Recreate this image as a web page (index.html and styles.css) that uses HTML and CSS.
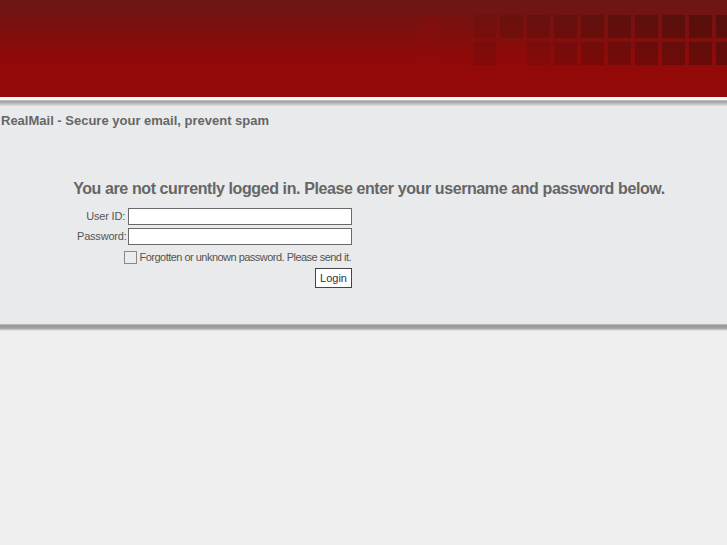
FILE: index.html
```html
<!DOCTYPE html>
<html>
<head>
<meta charset="utf-8">
<title>RealMail</title>
<link rel="stylesheet" href="styles.css">
</head>
<body>
<header class="header">
  <div class="tiles">
    <span></span><span></span><span></span><span></span><span></span><span></span><span></span><span></span><span></span><span></span><span></span><span></span>
    <span></span><span></span><span></span><span></span><span></span><span></span><span></span><span></span><span></span><span></span><span></span><span></span>
  </div>
</header>
<div class="sep-top"></div>
<main class="content">
  <div class="brand">RealMail - Secure your email, prevent spam</div>
  <h1 class="notice">You are not currently logged in. Please enter your username and password below.</h1>
  <form class="login">
    <label class="lbl" for="uid">User ID:</label>
    <input class="field" id="uid" type="text">
    <label class="lbl" for="pwd">Password:</label>
    <input class="field" id="pwd" type="password">
    <div class="remind"><span class="box"></span><span>Forgotten or unknown password. Please send it.</span></div>
    <div class="actions"><button type="button" class="btn">Login</button></div>
  </form>
</main>
<div class="sep-bottom"></div>
</body>
</html>
```
FILE: styles.css
```css
html, body {
  margin: 0;
  padding: 0;
  background: #efefef;
  font-family: "Liberation Sans", Arial, sans-serif;
}
.header {
  height: 97px;
  background: linear-gradient(#6d1614 0px, #721412 12px, #800f0d 35px, #8f0a09 58px, #930908 72px, #930908 97px);
  overflow: hidden;
}
.tiles {
  display: grid;
  grid-template-columns: repeat(12, 23px);
  grid-template-rows: 23px 23px;
  column-gap: 4px;
  row-gap: 4px;
  padding-top: 15px;
  margin-left: 419px;
  width: 330px;
}
.tiles span { background: rgba(70, 14, 10, 0.3); }
.tiles span:nth-child(1) { background: rgba(170, 10, 10, 0.12); }
.tiles span:nth-child(2) { background: rgba(150, 10, 10, 0.1); }
.tiles span:nth-child(3) { background: rgba(70, 14, 10, 0.14); }
.tiles span:nth-child(4) { background: rgba(70, 14, 10, 0.22); }
.tiles span:nth-child(5) { background: rgba(70, 14, 10, 0.28); }
.tiles span:nth-child(6) { background: rgba(70, 14, 10, 0.34); }
.tiles span:nth-child(7) { background: rgba(70, 14, 10, 0.4); }
.tiles span:nth-child(8) { background: rgba(70, 14, 10, 0.46); }
.tiles span:nth-child(9) { background: rgba(70, 14, 10, 0.5); }
.tiles span:nth-child(10) { background: rgba(70, 14, 10, 0.55); }
.tiles span:nth-child(11) { background: rgba(70, 14, 10, 0.6); }
.tiles span:nth-child(12) { background: rgba(70, 14, 10, 0.62); }
.tiles span:nth-child(13) { background: rgba(170, 10, 10, 0.06); }
.tiles span:nth-child(14) { background: rgba(150, 10, 10, 0.08); }
.tiles span:nth-child(15) { background: rgba(70, 14, 10, 0.16); }
.tiles span:nth-child(16) { background: rgba(70, 14, 10, 0); }
.tiles span:nth-child(17) { background: rgba(70, 14, 10, 0.18); }
.tiles span:nth-child(18) { background: rgba(70, 14, 10, 0.26); }
.tiles span:nth-child(19) { background: rgba(70, 14, 10, 0.3); }
.tiles span:nth-child(20) { background: rgba(70, 14, 10, 0.38); }
.tiles span:nth-child(21) { background: rgba(70, 14, 10, 0.42); }
.tiles span:nth-child(22) { background: rgba(70, 14, 10, 0.48); }
.tiles span:nth-child(23) { background: rgba(70, 14, 10, 0.54); }
.tiles span:nth-child(24) { background: rgba(70, 14, 10, 0.58); }

.sep-top {
  height: 9px;
  background: linear-gradient(#f6f6f6 0px, #f6f6f6 3px, #dcdcdc 3px, #9c9c9c 4px, #b4b4b4 6px, #d2d2d2 8px, #e2e2e2 9px);
}
.content {
  background: #e9eaeb;
  height: 218px;
  padding-top: 7px;
  box-sizing: border-box;
  color: #636363;
}
.brand {
  margin-left: 1px;
  font-size: 13px;
  font-weight: bold;
  line-height: 16px;
  color: #666;
}
.notice {
  margin: 50px 0 9px 0;
  font-size: 16px;
  line-height: 20px;
  font-weight: bold;
  letter-spacing: -0.4px;
  color: #666;
  text-align: center;
  padding-left: 11px;
}
.login {
  display: grid;
  grid-template-columns: 48px 224px;
  column-gap: 3px;
  row-gap: 3px;
  margin-left: 77px;
  font-size: 11px;
  color: #555;
}
.lbl {
  text-align: right;
  line-height: 17px;
  white-space: nowrap;
  letter-spacing: -0.2px;
}
.field {
  box-sizing: border-box;
  height: 17px;
  width: 224px;
  margin: 0;
  padding: 0 2px;
  border: 1px solid #6a6a6a;
  background: #fff;
  font: 11px "Liberation Sans", Arial, sans-serif;
}
.remind {
  grid-column: 1 / 3;
  display: flex;
  align-items: center;
  justify-content: flex-end;
  gap: 3px;
  margin-top: 3px;
  margin-right: 1px;
  line-height: 13px;
  letter-spacing: -0.52px;
}
.box {
  width: 11px;
  height: 11px;
  border: 1px solid #888;
  background: #ececec;
  display: inline-block;
}
.actions {
  grid-column: 1 / 3;
  display: flex;
  justify-content: flex-end;
  margin-top: 1px;
}
.btn {
  box-sizing: border-box;
  width: 37px;
  height: 20px;
  padding: 0;
  border: 1px solid #444;
  background: #fff;
  font: 11px "Liberation Sans", Arial, sans-serif;
  color: #333;
}
.sep-bottom {
  height: 7px;
  background: linear-gradient(#cfcfcf 0px, #9d9d9d 1px, #9a9a9a 3px, #aeaeae 5px, #d6d6d6 6px, #efefef 7px);
}
```
